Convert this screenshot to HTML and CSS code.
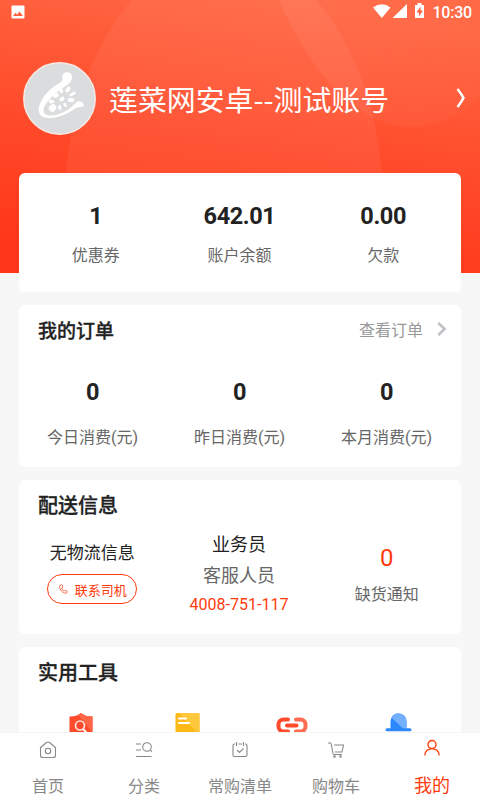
FILE: index.html
```html
<!DOCTYPE html>
<html lang="zh-CN">
<head>
<meta charset="utf-8">
<title>我的</title>
<link rel="stylesheet" href="styles.css">
</head>
<body>
<div class="app">
  <main class="content">
    <svg class="backdrop" width="480" height="273" viewBox="0 0 480 273">
      <defs>
        <linearGradient id="sky" gradientUnits="userSpaceOnUse" x1="260" y1="0" x2="222" y2="273"><stop offset="0" stop-color="#ff6642"/><stop offset=".55" stop-color="#ff4a2a"/><stop offset="1" stop-color="#ff3619"/></linearGradient>
        <linearGradient id="orb" x1="0" y1="0" x2="1" y2="0"><stop offset="0" stop-color="#fff" stop-opacity=".07"/><stop offset="1" stop-color="#fff" stop-opacity="0"/></linearGradient>
      </defs>
      <rect width="480" height="273" fill="url(#sky)"/>
      <ellipse cx="224" cy="209" rx="160" ry="255" fill="#fff" fill-opacity=".055"/>
      <ellipse cx="412" cy="-312" rx="189" ry="439" fill="url(#orb)"/>
    </svg>
    <div class="status">
      <svg width="14" height="14" viewBox="0 0 14 14"><rect x=".5" y=".5" width="13" height="13" rx="1" fill="#fff"/><path d="M2 11l2.500-3.300 1.700 2 2.300-3.200L12 11z" fill="#ff603d"/></svg>
      <div class="status-right">
        <svg width="52" height="16" viewBox="0 0 52 16" fill="#fff"><path d="M0 4.500Q9 -2 17.500 4.500L8.800 15z"/><path d="M34 1v14H19.500z"/><path d="M42 2h2.500V0h4v2h2.500v13H42z"/><path d="M47.500 3.500l-4 6h2.500v4l4-6h-2.500z" fill="#ff603d"/></svg>
        <span class="clock">10:30</span>
      </div>
    </div>
    <header class="profile">
      <svg class="avatar" width="74" height="74" viewBox="0 0 74 74">
        <circle cx="37.500" cy="37.500" r="35.700" fill="#dadcde" stroke="#f7e9e6" stroke-width="1.500"/>
        <g fill="#fff"><path d="M40.500 18c-.5-4 .5-6.500 4-6.800 4-.2 6.500 3 5.300 7-.8 3-3 4.500-6 6.800C36 30 25 39 22 46.500c-1.500 6 1.500 8.500 8 8 9-.8 17-5.500 22-11 1.500-2 3-3.500 5.500-3.300 3 .3 4.500 2.300 4.500 4.800-3 1.500-6 .7-9 2.500C47 52 37 57 27 57c-8 0-11.500-4.500-10-11 2.500-9.500 10-17.500 18-22.500 3.500-2 5.300-3 5.500-5.500z"/>
        <ellipse cx="30.500" cy="47" rx="4" ry="3.400" transform="rotate(-45 30.500 47)"/><ellipse cx="29.500" cy="40.500" rx="2.700" ry="2.100"/><ellipse cx="34" cy="34.500" rx="3" ry="2.200" transform="rotate(-20 34 34.500)"/><ellipse cx="40" cy="38" rx="2.700" ry="2" transform="rotate(-35 40 38)"/><ellipse cx="39.500" cy="30" rx="1.600" ry="2.500" transform="rotate(20 39.500 30)"/><ellipse cx="46" cy="28.500" rx="1.900" ry="3.300" transform="rotate(30 46 28.500)"/><ellipse cx="50.500" cy="33" rx="3.600" ry="1.400" transform="rotate(-30 50.500 33)"/><ellipse cx="49" cy="39" rx="3.400" ry="2"/><ellipse cx="43" cy="43.800" rx="1.400" ry="2.300" transform="rotate(-30 43 43.800)"/><ellipse cx="37.800" cy="46.500" rx="1.700" ry="2.600"/></g>
      </svg>
      <h1 class="name">莲菜网安卓--测试账号</h1>
      <svg class="profile-arrow" width="10" height="20" viewBox="0 0 10 20" fill="none" stroke="#fff" stroke-width="2.500"><path d="M1.500 1Q5 5.500 7.500 9.800 5 14.500 1.500 19"/></svg>
    </header>

    <section class="card account">
      <div class="metric"><b>1</b><span>优惠券</span></div>
      <div class="metric"><b>642.01</b><span>账户余额</span></div>
      <div class="metric"><b>0.00</b><span>欠款</span></div>
    </section>

    <section class="card orders">
      <div class="card-head">
        <h2>我的订单</h2>
        <a class="more">查看订单<svg width="10" height="14" viewBox="0 0 10 14" fill="none" stroke="#c0c0c6" stroke-width="2.600"><path d="M1.300 1l6.300 6-6.300 6"/></svg></a>
      </div>
      <div class="order-grid">
        <div class="metric"><b>0</b><span>今日消费(元)</span></div>
        <div class="metric"><b>0</b><span>昨日消费(元)</span></div>
        <div class="metric"><b>0</b><span>本月消费(元)</span></div>
      </div>
    </section>

    <section class="card delivery">
      <h2>配送信息</h2>
      <div class="delivery-grid">
        <div class="logistics">
          <span class="no-info">无物流信息</span>
          <a class="call"><svg width="9" height="10" viewBox="0 0 9 10" fill="none" stroke="#fb5a38" stroke-width=".9"><path d="M1.200 1.200Q3 0 3.500 1.500L3.700 3Q3.500 3.800 2.600 4 3.500 6.300 5.200 7.200 5.800 6 7 6.500L8.300 7.500Q8.400 9 6.800 9.200C3.500 9.200.5 5.500.6 2.500Z"/></svg>联系司机</a>
        </div>
        <div class="agent">
          <span class="role">业务员</span>
          <span class="staff">客服人员</span>
          <a class="tel">4008-751-117</a>
        </div>
        <div class="shortage"><em>0</em><span>缺货通知</span></div>
      </div>
    </section>

    <section class="card tools">
      <h2>实用工具</h2>
      <div class="tool-grid">
        <svg width="32" height="32" viewBox="0 0 32 32"><path d="M4.500 4.500Q11 5 16 1q5 4 11.500 3.500V20q-2 7-11.500 11Q6 27 4.500 20z" fill="#ff4a2c"/><path d="M4.500 4.500Q11 5 16 1q5 4 11.500 3.500V20L14 4z" fill="#ff6648"/><circle cx="15" cy="13.500" r="4.500" fill="none" stroke="#ffe4dc" stroke-width="1.700"/><path d="M18 17l4 4" stroke="#fff" stroke-width="1.800"/></svg>
        <svg width="32" height="32" viewBox="0 0 32 32"><rect x="4.500" y="1" width="24" height="29" rx="1.500" fill="#ffb916"/><path d="M8 1h19q1.500 0 1.500 1.500V23z" fill="#ffc73c"/><path d="M8 6.500h7M8 11h10" stroke="#fff" stroke-width="2.200" stroke-linecap="round"/></svg>
        <svg width="32" height="32" viewBox="0 0 32 32" fill="none" stroke-width="4" stroke-linecap="round"><path d="M12 7.500H7.500a5 5 0 0 0-5 5v2a5 5 0 0 0 5 5h4.500M11 13.500h9.500" stroke="#ff4a2c"/><path d="M20 7.500h4.500a5 5 0 0 1 5 5v2a5 5 0 0 1-5 5h-4.500" stroke="#ff6b50"/></svg>
        <svg width="32" height="32" viewBox="0 0 32 32"><path d="M8.500 17v-7.500a8 8 0 0 1 16 0V17z" fill="#2c87fb"/><path d="M9.500 5.500A8 8 0 0 1 24.500 9.500V17h-3z" fill="#73b0ff"/><path d="M5 17.700h23" stroke="#2c87fb" stroke-width="3" stroke-linecap="round"/></svg>
      </div>
    </section>
  </main>

  <nav class="tabbar">
    <a class="tab"><svg width="18" height="18" viewBox="0 0 18 18"><path d="M1.500 6.500 7.500 1.500Q9 .5 10.500 1.500l6 5v8q0 2-2 2h-11q-2 0-2-2z"/><circle cx="9" cy="10" r="2.700"/></svg>首页</a>
    <a class="tab"><svg width="18" height="18" viewBox="0 0 18 18"><path d="M1 3h5M1 9h5M1 15.500h15.500M15 8.500l2 2.500"/><circle cx="12" cy="6" r="4.300"/></svg>分类</a>
    <a class="tab"><svg width="18" height="18" viewBox="0 0 18 18"><path d="M4 3H3.500q-1.500 0-1.500 1.500V14q0 1.500 1.500 1.500h11q1.500 0 1.500-1.500V4.500Q16 3 14.500 3H14M7.500 3h3.500M5.500 1v4M12.500 1v4M6 9l2.500 2.500 4-4"/></svg>常购清单</a>
    <a class="tab"><svg width="18" height="18" viewBox="0 0 18 18"><path d="M1 2h2q1 0 1.200 1L6 12.500q.2 1 1 1h8M7 4h9.500L15 11H8"/><circle cx="7.500" cy="15.500" r=".8"/><circle cx="13.500" cy="15.500" r=".8"/></svg>购物车</a>
    <a class="tab active"><svg width="18" height="18" viewBox="0 0 18 18"><circle cx="9" cy="5.500" r="4"/><path d="M1.800 16.500C2 7.300 16 7.300 16.200 16.500"/></svg>我的</a>
  </nav>
</div>
</body>
</html>
```

FILE: styles.css
```css
* { box-sizing: border-box; }
body { margin: 0; font-family: Roboto, "Noto Sans CJK SC", sans-serif; color: #222; }
h1, h2 { margin: 0; }
svg { display: block; flex: none; }
.app { width: 480px; height: 800px; display: flex; flex-direction: column; background: #f7f7f7; overflow: hidden; }
.content { position: relative; height: 732px; flex: none; overflow: hidden; }
.backdrop { position: absolute; top: 0; left: 0; }
.status { position: relative; height: 24px; display: flex; justify-content: space-between; align-items: flex-start; padding: 5px 8px 0 11px; color: #fff; }
.status-right { display: flex; gap: 7px; margin-top: -2px; }
.clock { font-size: 16px; line-height: 20px; font-weight: 500; letter-spacing: -.2px; }
.profile { position: relative; height: 149px; display: flex; align-items: center; padding: 0 14px 1px 22px; }
.avatar { margin-right: 13px; }
.name { font-family: "Noto Sans CJK SC", sans-serif; font-size: 28.9px; line-height: 40px; font-weight: 400; color: #fff; flex: 1; white-space: nowrap; padding-bottom: 1px; }
.profile-arrow { margin-bottom: 1px; }
.card { position: relative; margin: 0 19px 13px; background: #fff; border-radius: 6px; }
.card h2 { font-size: 20px; line-height: 30px; font-weight: 500; -webkit-text-stroke: .3px #222; }
.metric { display: flex; flex-direction: column; align-items: center; }
.metric b { font-size: 23.5px; line-height: 28px; font-weight: 700; letter-spacing: -.4px; }
.metric span { font-size: 16px; line-height: 24px; color: #666; }
.account { height: 119px; display: grid; grid-template-columns: repeat(3, 1fr); padding: 29px 6px 0 5px; }
.account .metric { gap: 14px; }
.orders { height: 162px; padding-top: 10px; }
.card-head { display: flex; justify-content: space-between; align-items: center; padding: 0 14px 0 19px; height: 30px; }
.orders h2 { font-size: 19px; padding-top: 3px; }
.more { display: flex; align-items: center; gap: 14px; font-size: 16px; color: #999; margin-top: -2px; }
.order-grid { display: grid; grid-template-columns: repeat(3, 1fr); padding: 33px 1px 0 0; }
.order-grid .metric { gap: 20px; }
.delivery { height: 154px; padding-top: 11px; }
.delivery h2, .tools h2 { padding-left: 19px; }
.delivery-grid { display: grid; grid-template-columns: repeat(3, 1fr); padding-right: 2px; }
.logistics, .agent, .shortage { display: flex; flex-direction: column; align-items: center; }
.logistics { padding-top: 20px; }
.no-info { font-size: 17px; line-height: 24px; }
.call { display: flex; align-items: center; justify-content: center; gap: 7px; width: 90px; height: 30px; margin: 9px 1px 0 0; border: 1px solid #ff3b0d; border-radius: 15px; color: #ff3b0d; font-size: 13px; padding-left: 2px; }
.agent { padding-top: 12px; }
.role, .staff { font-size: 18px; line-height: 24px; }
.staff { margin-top: 7px; color: #666; }
.tel { margin-top: 7px; font-size: 16px; line-height: 20px; color: #ff3b0d; }
.shortage { padding: 23px 0 0 2px; }
.shortage em { font-style: normal; font-size: 24px; line-height: 28px; color: #ff3b0d; }
.shortage span { margin-top: 11px; font-size: 16px; line-height: 24px; color: #666; }
.tools { height: 160px; padding-top: 11px; }
.tool-grid { display: grid; grid-template-columns: repeat(4, 1fr); justify-items: center; padding: 24px 10px 0 9px; }
.tabbar { position: relative; height: 68px; flex: none; display: grid; grid-template-columns: repeat(5, 1fr); background: #fff; border-top: 1px solid #f4f4f4; }
.tab { display: flex; flex-direction: column; align-items: center; padding-top: 8px; gap: 16px; font-size: 16px; line-height: 24px; color: #888; }
.tab svg { fill: none; stroke: currentColor; stroke-width: 1.1; }
.active { padding-top: 6px; gap: 17px; font-size: 18px; color: #ff3b0d; }
.active svg { stroke-width: 1.4; }
```
